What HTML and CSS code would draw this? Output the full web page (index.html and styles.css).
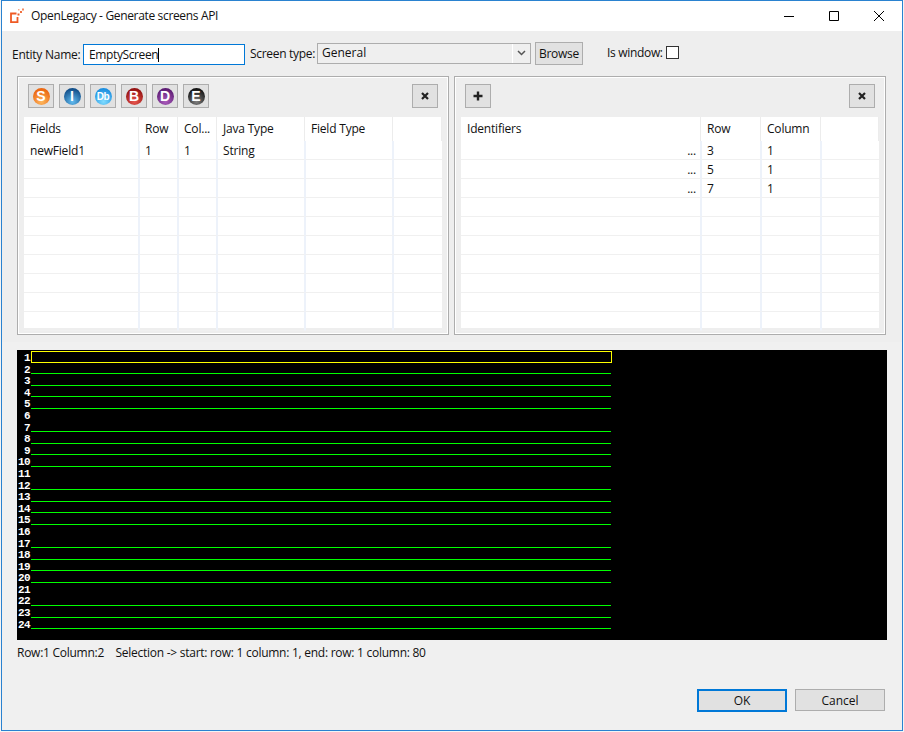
FILE: index.html
```html
<!DOCTYPE html>
<html lang="en">

<head>
    <meta charset="UTF-8">
    <title>OpenLegacy - Generate screens API</title>
    <link rel="stylesheet" href="styles.css">
</head>

<body>
    <div class="window">
        <div class="titlebar">
            <svg class="logo" width="18" height="18" viewBox="0 0 18 18">
                <path d="M6.5 6.5H1V15.2H7.5V10" fill="none" stroke="#ef5a24" stroke-width="1.8"/>
                <rect x="7.5" y="6.5" width="2" height="2" fill="#ef5a24"/>
                <rect x="10" y="4" width="2" height="2" fill="#f0703f"/>
                <rect x="8" y="2" width="1.5" height="1.5" fill="#f5a98a"/>
                <rect x="12" y="1.5" width="2" height="2" fill="#f28a62"/>
            </svg>
            <span class="title">OpenLegacy - Generate screens API</span>
            <div class="controls">
                <svg width="12" height="12" viewBox="0 0 12 12"><path d="M1 6.5h10" stroke="#000" fill="none"/></svg>
                <svg width="12" height="12" viewBox="0 0 12 12"><path d="M1.5 1.5h9v9h-9z" stroke="#000" fill="none"/></svg>
                <svg width="12" height="12" viewBox="0 0 12 12"><path d="M1 1l10 10M11 1l-10 10" stroke="#000" fill="none"/></svg>
            </div>
        </div>

        <div class="content">
            <div class="upper">
                <div class="top-row">
                    <label class="entity-label">Entity Name:</label>
                    <div class="text-input">EmptyScreen<span class="caret"></span></div>
                    <label class="type-label">Screen type:</label>
                    <div class="select">
                        <span class="select-value">General</span>
                        <span class="select-arrow">
                            <svg width="9" height="6" viewBox="0 0 9 6"><path d="M1 1l3.5 3.5L8 1" stroke="#555" stroke-width="1.5" fill="none"/></svg>
                        </span>
                    </div>
                    <button class="btn browse">Browse</button>
                    <label class="window-label">Is window:</label>
                    <span class="checkbox"></span>
                </div>

                <div class="panels">
                    <div class="panel">
                        <div class="toolbar">
                            <button class="btn tool"><span class="badge orange">S</span></button>
                            <button class="btn tool"><span class="badge blue">I</span></button>
                            <button class="btn tool"><span class="badge sky">Db</span></button>
                            <button class="btn tool"><span class="badge red">B</span></button>
                            <button class="btn tool"><span class="badge purple">D</span></button>
                            <button class="btn tool"><span class="badge black">E</span></button>
                            <button class="btn tool push"><svg width="8" height="8" viewBox="0 0 8 8"><path d="M1 1l6 6M7 1l-6 6" stroke="#222" stroke-width="2.2" fill="none"/></svg></button>
                        </div>
                        <div class="table fields" id="fields"></div>
                    </div>
                    <div class="panel">
                        <div class="toolbar">
                            <button class="btn tool"><svg width="10" height="10" viewBox="0 0 10 10"><path d="M5 0.5v9M0.5 5h9" stroke="#222" stroke-width="2.4" fill="none"/></svg></button>
                            <button class="btn tool push"><svg width="8" height="8" viewBox="0 0 8 8"><path d="M1 1l6 6M7 1l-6 6" stroke="#222" stroke-width="2.2" fill="none"/></svg></button>
                        </div>
                        <div class="table identifiers" id="identifiers"></div>
                    </div>
                </div>
            </div>

            <div class="terminal" id="terminal"></div>

            <div class="status">Row:1 Column:2 &nbsp;&nbsp; Selection -&gt; start: row: 1 column: 1, end: row: 1 column: 80</div>

            <div class="actions">
                <button class="btn action default">OK</button>
                <button class="btn action">Cancel</button>
            </div>
        </div>
    </div>
    <script>
        function buildTable(el, head, rows, total) {
            let html = ''
            head.forEach(function (h) {
                html += '<div class="th">' + h + '</div>'
            })
            for (let i = 0; i < total; i++) {
                let row = rows[i] || []
                head.forEach(function (h, c) {
                    let val = row[c] || ''
                    let cls = 'td'
                    if (val === '...') cls += ' dots'
                    if (c === 0) cls += ' first'
                    if (c === head.length - 1) cls += ' last'
                    html += '<div class="' + cls + '">' + val + '</div>'
                })
            }
            el.innerHTML = html
        }

        buildTable(document.querySelector('#fields'),
            ['Fields', 'Row', 'Col...', 'Java Type', 'Field Type', ''],
            [['newField1', '1', '1', 'String', '', '']], 10)

        buildTable(document.querySelector('#identifiers'),
            ['Identifiers', 'Row', 'Column', ''],
            [['...', '3', '1', ''], ['...', '5', '1', ''], ['...', '7', '1', '']], 10)

        let terminal = document.querySelector('#terminal'),
            str = ''
        for (let i = 1; i <= 24; i++) {
            let cls = 'field'
            if (i === 1) {
                cls += ' selected'
            } else if (i % 5 !== 1) {
                cls += ' line'
            }
            str += '<div class="term-row"><span class="num">' + i + '</span><span class="' + cls + '"></span></div>'
        }
        terminal.innerHTML = str
    </script>
</body>

</html>
```

FILE: styles.css
```css
* {
    padding: 0;
    margin: 0;
    box-sizing: border-box;
}

html,
body {
    width: 904px;
    height: 732px;
    overflow: hidden;
    background: #f4f4f4;
}

body {
    font-family: "Open Sans", "Noto Sans", sans-serif;
    font-size: 12px;
    color: #111;
}

.window {
    width: 902px;
    height: 731px;
    margin-left: 1px;
    display: flex;
    flex-direction: column;
    border: 1px solid #2a82d0;
    background: #f0f0f0;
}

/* title bar */
.titlebar {
    height: 30px;
    flex: none;
    display: flex;
    align-items: center;
    background: #fff;
    padding-left: 8px;
}

.logo {
    margin-right: 3px;
}

.title {
    margin-top: -1px;
    letter-spacing: -0.34px;
}

.controls {
    margin-left: auto;
    display: flex;
    gap: 33px;
    padding-right: 17px;
    margin-top: -1px;
}

/* top form */
.content {
    flex: 1;
    display: flex;
    flex-direction: column;
}

.upper {
    padding: 11px 15px 7px 15px;
    background: #eeeeee;
}

.top-row {
    display: flex;
    align-items: center;
    height: 24px;
    margin-left: -5px;
}

.entity-label {
    width: 71px;
    letter-spacing: -0.25px;
}

.text-input {
    width: 162px;
    height: 21px;
    border: 1px solid #0078d7;
    background: #fff;
    padding-left: 5px;
    line-height: 19px;
    letter-spacing: -0.38px;
}

.caret {
    display: inline-block;
    width: 1px;
    height: 14px;
    background: #000;
    vertical-align: -3px;
}

.type-label {
    margin-left: 5px;
    width: 67px;
    letter-spacing: -0.3px;
    margin-top: -2px;
}

.select {
    width: 214px;
    height: 21px;
    border: 1px solid #adadad;
    background: #efefef;
    display: flex;
    align-items: center;
    margin-top: -2px;
}

.select-value {
    flex: 1;
    padding-left: 4px;
    margin-top: -2px;
}

.select-arrow {
    width: 18px;
    height: 19px;
    border-left: 1px solid #fff;
    display: flex;
    align-items: center;
    justify-content: center;
}

.btn {
    font: inherit;
    color: inherit;
    background: #e1e1e1;
    border: 1px solid #adadad;
    display: flex;
    align-items: center;
    justify-content: center;
}

.browse {
    width: 48px;
    height: 23px;
    margin-left: 4px;
    margin-top: -1px;
    letter-spacing: -0.25px;
}

.window-label {
    margin-left: 24px;
    width: 59px;
    letter-spacing: -0.32px;
    margin-top: -4px;
}

.checkbox {
    width: 13px;
    height: 13px;
    border: 1px solid #333;
    background: #fff;
    margin-top: -3px;
}

/* panels */
.panels {
    display: flex;
    gap: 5px;
    margin-top: 10px;
}

.panel {
    width: 432px;
    height: 259px;
    border: 1px solid #adadad;
    box-shadow: inset 0 0 0 1px #fff;
    padding: 7px 6px 0 6px;
}

.toolbar {
    display: flex;
    gap: 5px;
    height: 24px;
    padding: 0 4px;
}

.tool {
    width: 26px;
    height: 24px;
}

.push {
    margin-left: auto;
}

.badge {
    width: 17px;
    height: 17px;
    flex: none;
    border-radius: 50%;
    color: #fff;
    font-family: "Liberation Sans", sans-serif;
    font-weight: bold;
    font-size: 14px;
    line-height: 17px;
    text-align: center;
}

.orange { background: radial-gradient(circle at 50% 80%, #fdb85f, #ec6a14 72%); }
.blue { background: radial-gradient(circle at 50% 80%, #62bcf0, #124f8a 78%); }
.sky { background: radial-gradient(circle at 50% 80%, #7fdcff, #1c8fe0 78%); font-size: 10px; letter-spacing: -0.4px; }
.red { background: radial-gradient(circle at 50% 80%, #e8564e, #941212 78%); }
.purple { background: radial-gradient(circle at 50% 80%, #aa5cbc, #5d1c74 78%); }
.black { background: radial-gradient(circle at 50% 80%, #808080, #141414 78%); }

/* tables */
.table {
    display: grid;
    margin-top: 9px;
    background: #fff;
    width: 418px;
    height: 211px;
    grid-auto-rows: 19px;
    grid-template-rows: 24px;
}

.fields {
    grid-template-columns: 115px 39px 39px 88px 88px 49px;
}

.identifiers {
    grid-template-columns: 240px 60px 60px 58px;
}

.th {
    padding-left: 6px;
    line-height: 23px;
    border-right: 1px solid #ececec;
    letter-spacing: -0.2px;
}

.th:nth-last-child(-n+1) {
    border-right: 0;
}

.td {
    padding-left: 5px;
    line-height: 20px;
    border-left: 1px solid #edf2fa;
    border-right: 1px solid #edf2fa;
    border-bottom: 1px solid #f0f0f0;
    letter-spacing: -0.2px;
    overflow: hidden;
}

.first {
    border-left: 0;
    padding-left: 6px;
}

.last {
    border-right: 0;
}

.dots {
    text-align: right;
    padding-right: 4px;
}

/* terminal */
.terminal {
    width: 870px;
    height: 290px;
    margin-top: 8px;
    margin-left: 15px;
    padding-top: 1px;
    background: #000;
    flex: none;
}

.term-row {
    height: 11.6px;
    display: flex;
}

.num {
    width: 14px;
    padding-right: 1px;
    color: #fff;
    font-family: "Liberation Mono", monospace;
    font-weight: bold;
    font-size: 11px;
    line-height: 15px;
    text-align: right;
    letter-spacing: -0.6px;
}

.field {
    width: 580px;
    height: 100%;
}

.line {
    border-bottom: 1px solid #00ff00;
}

.selected {
    width: 581px;
    height: 12px;
    border: 1px solid #ffff00;
}

/* bottom */
.status {
    margin-top: 4px;
    margin-left: 15px;
    line-height: 17px;
    letter-spacing: -0.26px;
}

.actions {
    margin-top: auto;
    padding: 0 17px 18px 0;
    display: flex;
    align-items: flex-start;
    justify-content: flex-end;
    gap: 8px;
}

.action {
    width: 90px;
    height: 22px;
}

.default {
    border: 2px solid #0078d7;
    height: 23px;
}
```
